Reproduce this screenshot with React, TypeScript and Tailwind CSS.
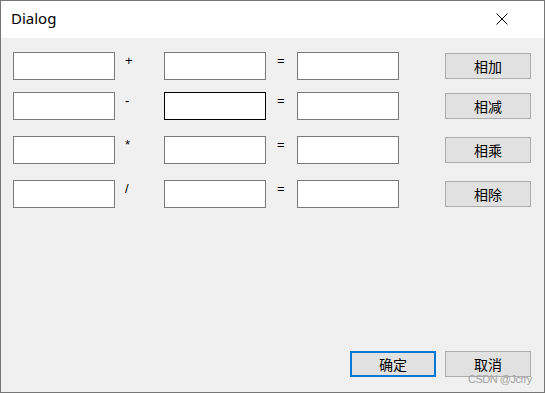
import React from "react";

const rows = [
  { op: "+", btn: "相加", focused: false },
  { op: "-", btn: "相减", focused: true },
  { op: "*", btn: "相乘", focused: false },
  { op: "/", btn: "相除", focused: false },
];

const cjk = { fontFamily: '"Noto Sans CJK SC", "Noto Sans", sans-serif' };
const ui = { fontFamily: '"Liberation Sans", Arial, sans-serif' };

function Box({ focused }: { focused?: boolean }) {
  return (
    <div
      className={
        "w-[102px] h-[28px] bg-white border shrink-0 " +
        (focused ? "border-[#000000]" : "border-[#7a7a7a]")
      }
    />
  );
}

export default function App() {
  return (
    <div className="w-[545px] h-[393px] border border-[#767676] flex flex-col bg-[#f0f0f0] relative overflow-hidden">
      <div className="h-[37px] bg-white flex items-center justify-between shrink-0">
        <span
          className="pl-[10px] text-[15px] text-black leading-none pb-[2px]"
          style={{ fontFamily: '"Noto Sans", "Open Sans", sans-serif' }}
        >
          Dialog
        </span>
        <svg width="12" height="12" viewBox="0 0 12 12" className="mr-[36px] mb-[1px]">
          <path d="M0.5 0.5 L11.5 11.5 M11.5 0.5 L0.5 11.5" stroke="#000" strokeWidth="1" fill="none" />
        </svg>
      </div>
      <div className="flex-1 flex flex-col pt-[14px] pl-[12px]">
        <div className="flex flex-col gap-y-[16px]">
          {rows.map((r, i) => (
            <div key={i} className={"flex items-start " + (i === 1 ? "-mt-[4px]" : "")}>
              <Box />
              <div className="w-[49px] pl-[10px] text-[13px] leading-[16px] pt-[1px] text-black" style={ui}>
                {r.op}
              </div>
              <Box focused={r.focused} />
              <div className="w-[31px] pl-[11px] text-[13px] leading-[16px] pt-[1px] text-black" style={ui}>
                =
              </div>
              <Box />
              <button
                className="ml-[46px] mt-[1px] w-[86px] h-[26px] bg-[#e1e1e1] border border-[#adadad] text-[14px] text-black leading-none flex items-center justify-center"
                style={cjk}
              >
                {r.btn}
              </button>
            </div>
          ))}
        </div>
        <div className="flex-1" />
        <div className="flex justify-end gap-[9px] pr-[13px] pb-[15px]">
          <button
            className="w-[86px] h-[26px] bg-[#e1e1e1] border-2 border-[#0078d7] text-[14px] text-black leading-none flex items-center justify-center"
            style={cjk}
          >
            确定
          </button>
          <button
            className="w-[86px] h-[26px] bg-[#e1e1e1] border border-[#adadad] text-[14px] text-black leading-none flex items-center justify-center"
            style={cjk}
          >
            取消
          </button>
        </div>
      </div>
      <div
        className="absolute left-[467px] top-[371px] text-[11px] leading-[14px] text-[#a3a3a3] tracking-[-0.5px]"
        style={ui}
      >
        CSDN @Jcrry
      </div>
    </div>
  );
}
